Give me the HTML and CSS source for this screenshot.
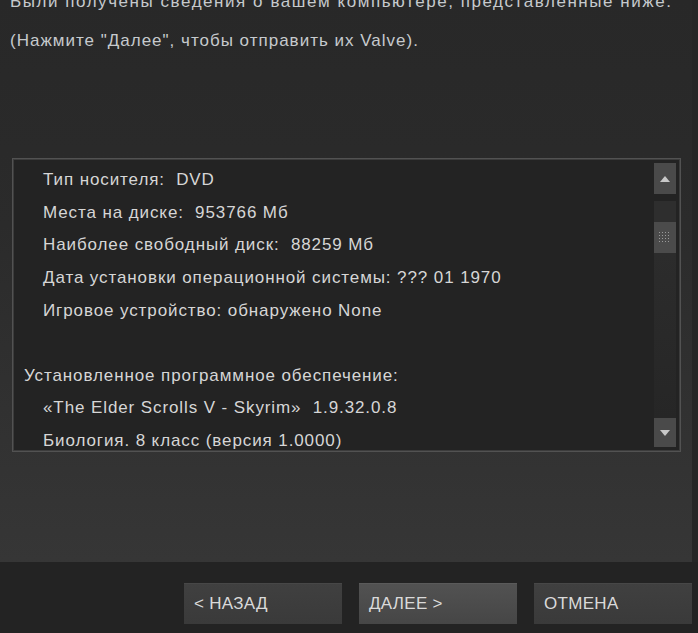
FILE: index.html
```html
<!DOCTYPE html>
<html lang="ru">
<head>
<meta charset="utf-8">
<title>Сведения о системе</title>
<link rel="stylesheet" href="styles.css">
</head>
<body>
<div class="window">
  <div class="panel">
    <p class="intro first">Были получены сведения о вашем компьютере, представленные ниже.</p>
    <p class="intro">(Нажмите "Далее", чтобы отправить их Valve).</p>
    <div class="listbox">
      <div class="lines">
        <div class="item">Тип носителя:&nbsp; DVD</div>
        <div class="item">Места на диске:&nbsp; 953766 Мб</div>
        <div class="item">Наиболее свободный диск:&nbsp; 88259 Мб</div>
        <div class="item">Дата установки операционной системы: ??? 01 1970</div>
        <div class="item">Игровое устройство: обнаружено None</div>
        <div class="item blank">&nbsp;</div>
        <div class="header">Установленное программное обеспечение:</div>
        <div class="item">«The Elder Scrolls V - Skyrim»&nbsp; 1.9.32.0.8</div>
        <div class="item">Биология. 8 класс (версия 1.0000)</div>
      </div>
      <div class="scrollbar">
        <div class="sb-btn">
          <svg width="10" height="6" viewBox="0 0 10 6"><polygon points="5,0 10,6 0,6" fill="#c8c8c8"/></svg>
        </div>
        <div class="track">
          <div class="track-top"></div>
          <div class="thumb">
            <svg width="12" height="12" viewBox="0 0 12 12">
              <g fill="#9a9a9a">
                <rect x="0" y="0" width="1" height="1"/><rect x="3" y="0" width="1" height="1"/><rect x="6" y="0" width="1" height="1"/><rect x="9" y="0" width="1" height="1"/>
                <rect x="0" y="3" width="1" height="1"/><rect x="3" y="3" width="1" height="1"/><rect x="6" y="3" width="1" height="1"/><rect x="9" y="3" width="1" height="1"/>
                <rect x="0" y="6" width="1" height="1"/><rect x="3" y="6" width="1" height="1"/><rect x="6" y="6" width="1" height="1"/><rect x="9" y="6" width="1" height="1"/>
                <rect x="0" y="9" width="1" height="1"/><rect x="3" y="9" width="1" height="1"/><rect x="6" y="9" width="1" height="1"/><rect x="9" y="9" width="1" height="1"/>
              </g>
            </svg>
          </div>
          <div class="track-rest"></div>
        </div>
        <div class="sb-btn">
          <svg width="10" height="6" viewBox="0 0 10 6"><polygon points="0,0 10,0 5,6" fill="#c8c8c8"/></svg>
        </div>
      </div>
    </div>
  </div>
  <div class="footer">
    <button class="btn">&lt; НАЗАД</button>
    <button class="btn btn-default">ДАЛЕЕ &gt;</button>
    <button class="btn">ОТМЕНА</button>
  </div>
</div>
</body>
</html>
```
FILE: styles.css
```css
html, body {
  margin: 0;
  padding: 0;
}
body {
  width: 698px;
  height: 633px;
  overflow: hidden;
  background: #262626;
  font-family: "Liberation Sans", Arial, sans-serif;
}
.window {
  display: flex;
  flex-direction: column;
  height: 633px;
}
.panel {
  width: 692px;
  height: 562px;
  box-sizing: border-box;
  padding: 0 0 0 10px;
  background: linear-gradient(#282828 0%, #2b2b2b 40%, #363636 100%);
  overflow: hidden;
}
.intro {
  margin: 0;
  font-size: 17px;
  line-height: 18px;
  letter-spacing: 1px;
  color: #c6cacd;
  white-space: nowrap;
}
.intro.first {
  margin-top: -7px;
  margin-bottom: 21px;
  letter-spacing: 1.55px;
}
.listbox {
  margin-top: 108px;
  margin-left: 2px;
  width: 669px;
  height: 294px;
  box-sizing: border-box;
  border: 1px solid #525252;
  box-shadow: inset 0 0 0 1px #3c3c3c;
  background: #232323;
  display: flex;
  overflow: hidden;
}
.lines {
  flex: 1;
  padding: 5px 0 0 11px;
  font-size: 17px;
  line-height: 32.625px;
  letter-spacing: 0.9px;
  color: #d6d6d6;
  white-space: nowrap;
  overflow: hidden;
}
.item {
  padding-left: 19px;
}
.header {
  padding-left: 0;
}
.scrollbar {
  width: 22px;
  margin: 4px 4px 4px 0;
  display: flex;
  flex-direction: column;
}
.sb-btn {
  height: 31px;
  background: #4a4a4a;
  display: flex;
  align-items: center;
  justify-content: center;
  flex: none;
}
.sb-btn:last-child {
  height: 29px;
}
.track {
  flex: 1;
  display: flex;
  flex-direction: column;
  margin: 7px 0 0;
}
.track-top {
  height: 21px;
  background: #2e2e2e;
}
.thumb {
  height: 31px;
  background: #4b4b4b;
  display: flex;
  align-items: center;
  justify-content: center;
}
.track-rest {
  flex: 1;
  background: linear-gradient(#2c2c2c, #262626);
}
.footer {
  flex: 1;
  background: #232323;
  display: flex;
  justify-content: flex-end;
  align-items: flex-start;
  gap: 17px;
  padding: 21px 6px 0 0;
}
.btn {
  width: 158px;
  height: 41px;
  border: 0;
  margin: 0;
  padding: 0 0 0 10px;
  text-align: left;
  font-family: "Liberation Sans", Arial, sans-serif;
  font-size: 17px;
  letter-spacing: 0.3px;
  color: #dadada;
  background: linear-gradient(#404040, #3a3a3a);
  box-shadow: inset 0 1px 0 #474747;
}
.btn-default {
  background: linear-gradient(#525252, #464646);
  box-shadow: inset 0 1px 0 #5a5a5a;
}
```
